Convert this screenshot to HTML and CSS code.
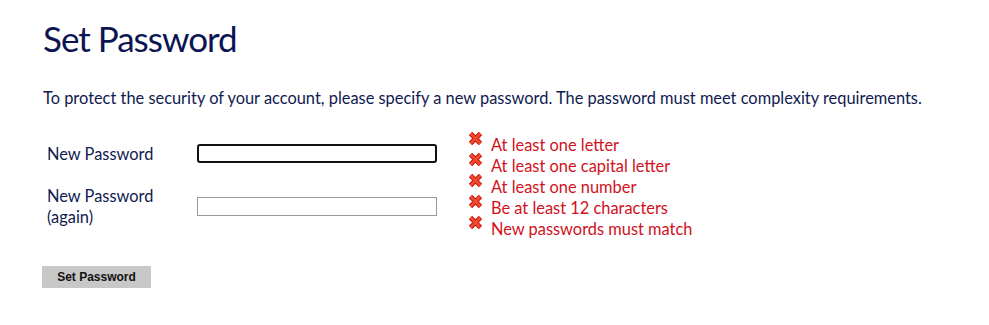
FILE: index.html
```
<!DOCTYPE html>
<html lang="en">
<head>
  <meta charset="UTF-8" />
  <title>Set Password</title>
  <link rel="stylesheet" href="styles.css">
</head>
<body>
  <div class="page">
    <h1>Set Password</h1>
    <p class="intro">To protect the security of your account, please specify a new password. The password must meet complexity requirements.</p>

    <form class="pw-form">
      <div class="fields">
        <div class="row">
          <label class="label" for="pw1">New Password</label>
          <input class="field focused" id="pw1" type="password">
        </div>
        <div class="row">
          <label class="label" for="pw2">New Password<br>(again)</label>
          <input class="field" id="pw2" type="password">
        </div>
      </div>

      <ul class="rules">
        <li><svg class="x" viewBox="0 0 15 15"><path class="x-edge" d="M2.5 2.5 12.5 12.5M12.5 2.5 2.5 12.5"/><path class="x-fill" d="M2.5 2.5 12.5 12.5M12.5 2.5 2.5 12.5"/></svg>At least one letter</li>
        <li><svg class="x" viewBox="0 0 15 15"><path class="x-edge" d="M2.5 2.5 12.5 12.5M12.5 2.5 2.5 12.5"/><path class="x-fill" d="M2.5 2.5 12.5 12.5M12.5 2.5 2.5 12.5"/></svg>At least one capital letter</li>
        <li><svg class="x" viewBox="0 0 15 15"><path class="x-edge" d="M2.5 2.5 12.5 12.5M12.5 2.5 2.5 12.5"/><path class="x-fill" d="M2.5 2.5 12.5 12.5M12.5 2.5 2.5 12.5"/></svg>At least one number</li>
        <li><svg class="x" viewBox="0 0 15 15"><path class="x-edge" d="M2.5 2.5 12.5 12.5M12.5 2.5 2.5 12.5"/><path class="x-fill" d="M2.5 2.5 12.5 12.5M12.5 2.5 2.5 12.5"/></svg>Be at least 12 characters</li>
        <li><svg class="x" viewBox="0 0 15 15"><path class="x-edge" d="M2.5 2.5 12.5 12.5M12.5 2.5 2.5 12.5"/><path class="x-fill" d="M2.5 2.5 12.5 12.5M12.5 2.5 2.5 12.5"/></svg>New passwords must match</li>
      </ul>
    </form>

    <button class="submit" type="button">Set Password</button>
  </div>
</body>
</html>
```

FILE: styles.css
```
body {
  margin: 0;
  background: #ffffff;
  font-family: Lato, "Open Sans", sans-serif;
  color: #0f1a4f;
}

.page {
  padding: 18px 0 0 43px;
}

h1 {
  font-size: 35px;
  font-weight: 400;
  letter-spacing: -1px;
  line-height: 40px;
  margin: 0;
  color: #0c1552;
}

.intro {
  font-size: 16.4px;
  margin: 30px 0 35px;
  line-height: 20px;
}

.pw-form {
  display: flex;
  align-items: flex-start;
}

.fields {
  width: 420px;
}

.row {
  display: flex;
  align-items: center;
  margin-bottom: 21px;
}

.label {
  width: 150px;
  padding-left: 4px;
  font-size: 16.4px;
  line-height: 21px;
}

.field {
  box-sizing: border-box;
  width: 240px;
  height: 19px;
  margin: 0;
  border: 1px solid #999999;
  padding: 0 2px;
  background: #fff;
}

.field.focused {
  border: 2px solid #111111;
  border-radius: 3px;
}

.rules {
  list-style: none;
  margin: -9px 0 0 0;
  padding: 0 0 0 5px;
  color: #d0111b;
  font-size: 16.4px;
  line-height: 21px;
}

.rules li {
  display: flex;
  align-items: flex-start;
}

.x {
  width: 15px;
  height: 15px;
  margin: -3px 8px 0 0;
  fill: none;
}

.x-edge {
  stroke: #c4150f;
  stroke-width: 4.6;
}

.x-fill {
  stroke: #f24a2c;
  stroke-width: 2.6;
}

.submit {
  margin-top: 18px;
  margin-left: -1px;
  width: 109px;
  height: 22px;
  border: 0;
  background: #c8c8c8;
  font-family: "Liberation Sans", Arial, sans-serif;
  font-weight: bold;
  font-size: 12px;
  color: #111;
  padding: 0;
}
```
